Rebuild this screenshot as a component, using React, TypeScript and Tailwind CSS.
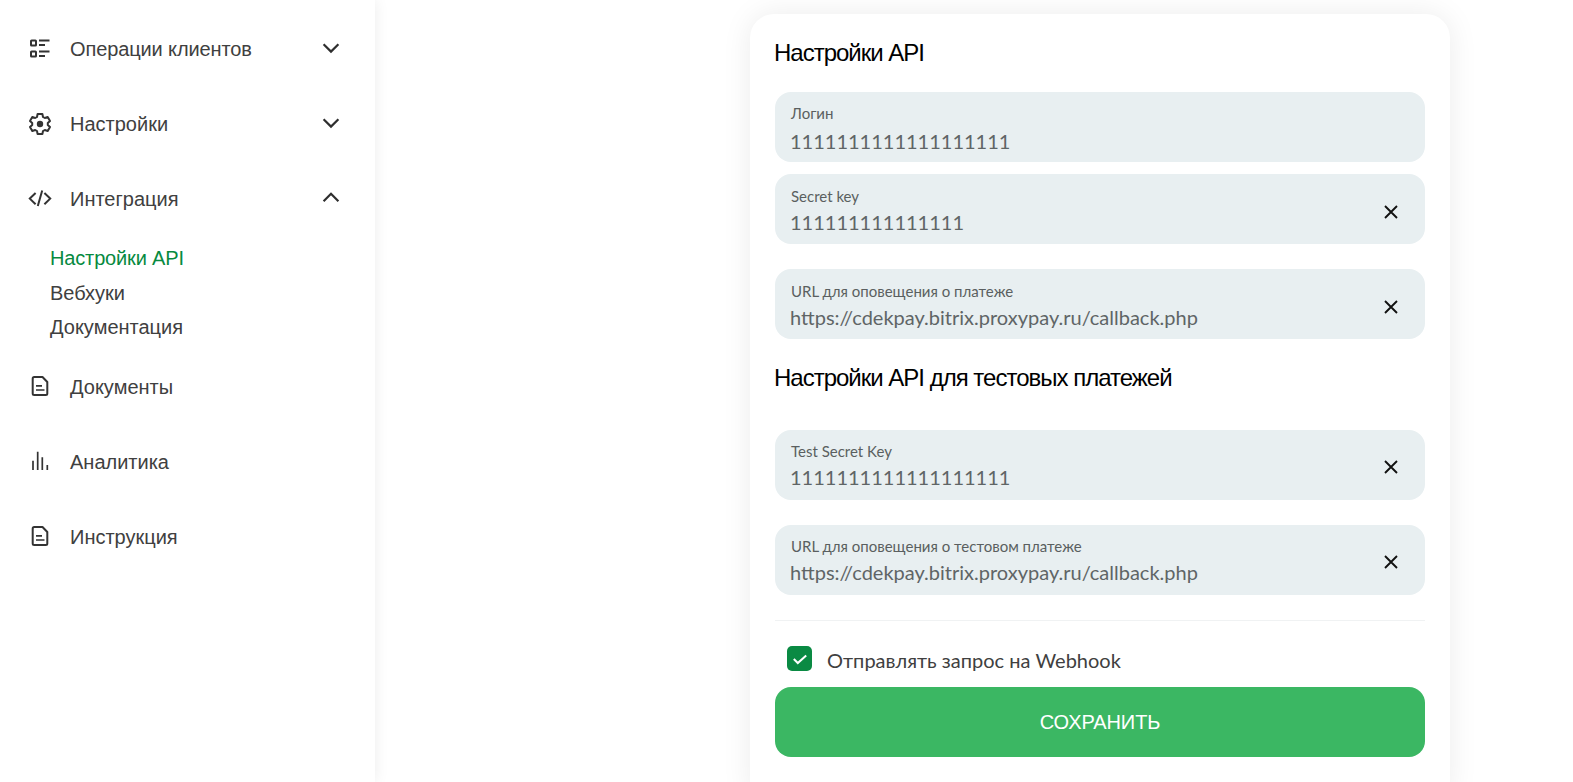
import React from "react";

const stroke = "#333333";

function ListIcon() {
  return (
    <svg width="24" height="24" viewBox="0 0 24 24" fill="none" stroke={stroke} strokeWidth="2">
      <rect x="3" y="3.5" width="5" height="5" rx="0.6" />
      <rect x="3" y="14.5" width="5" height="5" rx="0.6" />
      <path d="M11 3.5h10.5M11 8h6M11 14.5h10.5M11 19h6" />
    </svg>
  );
}
function GearIcon() {
  return (
    <svg width="24" height="24" viewBox="0 0 24 24" fill="none" stroke={stroke} strokeWidth="2" strokeLinejoin="round">
      <path d="M9.6 2h4.8l.6 3 1.8 1 2.9-1 2.3 4-2.2 2v2l2.2 2-2.3 4-2.9-1-1.8 1-.6 3H9.6l-.6-3-1.8-1-2.9 1-2.3-4 2.2-2v-2l-2.2-2 2.3-4 2.9 1L9 5z" />
      <circle cx="12" cy="12" r="3.2" fill={stroke} stroke="none" />
    </svg>
  );
}
function CodeIcon() {
  return (
    <svg width="24" height="24" viewBox="0 0 24 24" fill="none" stroke={stroke} strokeWidth="2">
      <path d="M7.6 6 1.8 11.6l5.8 5.6M16.4 6l5.8 5.6-5.8 5.6M14.2 3.6 9.8 19" />
    </svg>
  );
}
function DocIcon() {
  return (
    <svg width="24" height="24" viewBox="0 0 24 24" fill="none" stroke={stroke} strokeWidth="2" strokeLinejoin="round">
      <path d="M6.2 2h8.3l4.8 5v11.5a1.5 1.5 0 0 1-1.5 1.5H6.2a1.5 1.5 0 0 1-1.5-1.5v-15A1.5 1.5 0 0 1 6.2 2z" />
      <path d="M8 10.8h6M8 15h8.5" strokeWidth="1.7" />
    </svg>
  );
}
function BarsIcon() {
  return (
    <svg width="24" height="24" viewBox="0 0 24 24" fill="none" stroke={stroke} strokeWidth="1.7">
      <path d="M5 20v-9.3M9.7 20V1.7M14.3 20V7.3M19.3 20v-5" />
    </svg>
  );
}
function Chevron({ up }: { up?: boolean }) {
  return (
    <svg width="24" height="24" viewBox="0 0 24 24" fill="none" stroke="#2e2e2e" strokeWidth="2.2" className="ml-auto -mt-[2px] shrink-0">
      <path d={up ? "M4.6 15.2 12 7.8l7.4 7.4" : "M4.6 8.2 12 15.6l7.4-7.4"} />
    </svg>
  );
}
function CloseIcon({ mt }: { mt: string }) {
  return (
    <svg width="24" height="24" viewBox="0 0 24 24" fill="none" stroke="#111" strokeWidth="1.9" className={`${mt} shrink-0`}>
      <path d="M6 6l12 12M18 6 6 18" />
    </svg>
  );
}

function NavRow({ icon, label, chevron, track }: { icon: React.ReactNode; label: string; chevron?: "up" | "down"; track?: string }) {
  return (
    <div className="flex h-[75px] items-center pl-[28px] pr-[32px]">
      <div className="w-[42px] shrink-0">{icon}</div>
      <span className={`${track ?? ""} text-[20px] leading-[24px] text-[#404040] font-['Liberation_Sans',sans-serif]`}>{label}</span>
      {chevron && <Chevron up={chevron === "up"} />}
    </div>
  );
}

function Field({ label, value, clear, mt, valueMt, top, closeMt }: { label: string; value: string; clear?: boolean; mt: string; valueMt: string; top: string; closeMt?: string }) {
  return (
    <div className={`${mt} flex h-[70px] items-center rounded-[16px] bg-[#e8eff1] pl-[16px] pr-[22px] font-['Lato',sans-serif]`}>
      <div className={`${top} min-w-0 flex-1`}>
        <div className="text-[15px] leading-[20px] text-[#5a5f60]">{label}</div>
        <div className={`${valueMt} -ml-[1px] text-[20px] leading-[26px] text-[#5f6566]`}>{value}</div>
      </div>
      {clear && <CloseIcon mt={closeMt ?? "mt-[5px]"} />}
    </div>
  );
}

export default function App() {
  const url = "https://cdekpay.bitrix.proxypay.ru/callback.php";
  return (
    <div className="flex h-[782px] overflow-hidden bg-white">
      <aside className="z-10 h-full w-[375px] shrink-0 bg-white pt-[11px] shadow-[0_0_14px_rgba(0,0,0,0.08)]">
        <NavRow icon={<ListIcon />} label="Операции клиентов" chevron="down" track="tracking-[-0.12px]" />
        <NavRow icon={<GearIcon />} label="Настройки" chevron="down" />
        <NavRow icon={<CodeIcon />} label="Интеграция" chevron="up" />
        <div className="mt-[5px] flex flex-col pl-[50px] text-[20px] leading-[34.5px] font-['Liberation_Sans',sans-serif] text-[#404040]">
          <span className="tracking-[-0.15px] text-[#078a3f]">Настройки API</span>
          <span>Вебхуки</span>
          <span>Документация</span>
        </div>
        <div className="mt-[5px]">
          <NavRow icon={<DocIcon />} label="Документы" />
          <NavRow icon={<BarsIcon />} label="Аналитика" />
          <NavRow icon={<DocIcon />} label="Инструкция" />
        </div>
      </aside>
      <main className="flex-1 pl-[375px] pt-[14px]">
        <div className="h-[790px] w-[700px] rounded-[24px] bg-white px-[25px] pt-[24px] shadow-[0_0_30px_rgba(0,0,0,0.08)]">
          <h2 className="-ml-[1px] text-[24px] leading-[30px] tracking-[-1px] text-black font-['Liberation_Sans',sans-serif]">Настройки API</h2>
          <Field mt="mt-[24px]" top="pt-[2px]" valueMt="mt-[5px]" label="Логин" value="1111111111111111111" />
          <Field mt="mt-[12px]" top="pt-[2px]" valueMt="mt-[3px]" label="Secret key" value="111111111111111" clear />
          <Field mt="mt-[25px]" top="pt-[3px]" valueMt="mt-[3px]" label="URL для оповещения о платеже" value={url} clear />
          <h2 className="-ml-[1px] mt-[24px] text-[24px] leading-[30px] tracking-[-1px] text-black font-['Liberation_Sans',sans-serif]">Настройки API для тестовых платежей</h2>
          <Field mt="mt-[37px]" top="pt-0" valueMt="mt-[3px]" closeMt="mt-[3px]" label="Test Secret Key" value="1111111111111111111" clear />
          <Field mt="mt-[25px]" top="pt-0" valueMt="mt-[3px]" closeMt="mt-[3px]" label="URL для оповещения о тестовом платеже" value={url} clear />
          <div className="mt-[25px] h-px bg-[#f0f2f3]" />
          <div className="mt-[25px] flex h-[25px] items-center pl-[12px] font-['Lato',sans-serif]">
            <span className="flex h-[25px] w-[25px] items-center justify-center rounded-[5px] bg-[#0a8a43]">
              <svg width="18" height="18" viewBox="0 0 18 18" fill="none" stroke="#fff" strokeWidth="2">
                <path d="M2.8 9 6.8 13l8.4-7.5" />
              </svg>
            </span>
            <span className="ml-[15px] mt-[2px] text-[20px] leading-[26px] text-[#404040]">Отправлять запрос на Webhook</span>
          </div>
          <button className="mt-[16px] flex h-[70px] w-full items-center justify-center rounded-[16px] bg-[#3bb763] text-[20px] tracking-[-0.1px] text-white font-['Liberation_Sans',sans-serif]">
            СОХРАНИТЬ
          </button>
        </div>
      </main>
    </div>
  );
}
